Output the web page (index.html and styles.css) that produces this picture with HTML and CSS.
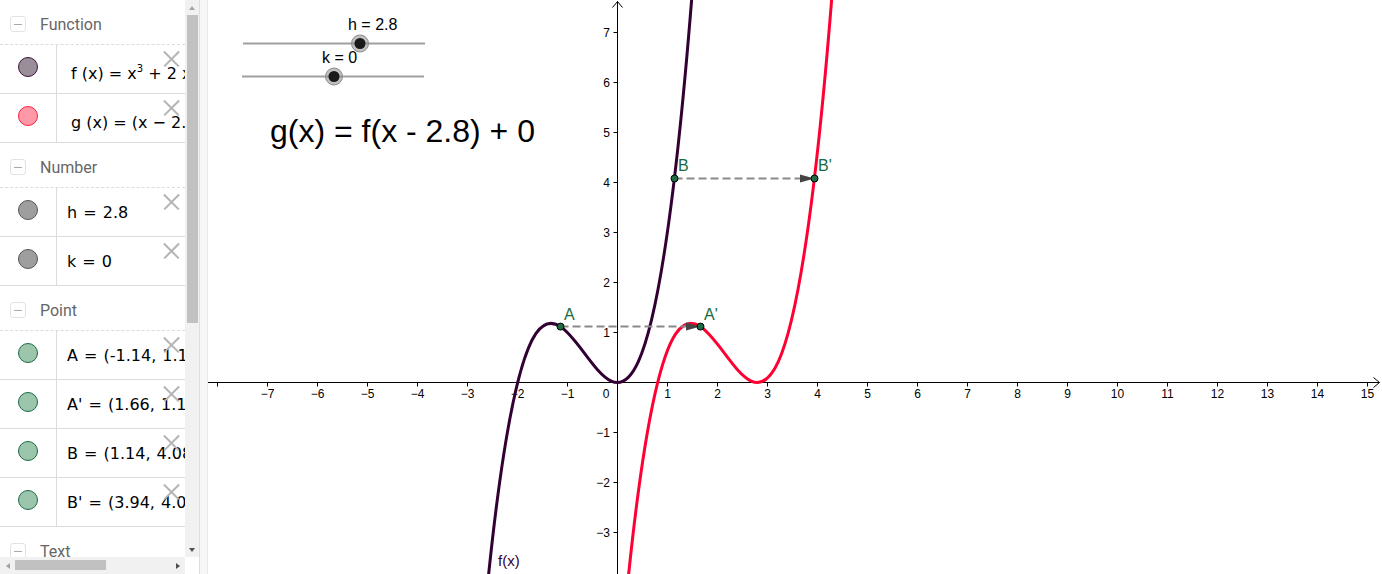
FILE: index.html
```html
<!DOCTYPE html>
<html>
<head>
<meta charset="utf-8">
<link rel="stylesheet" href="styles.css">
</head>
<body>
<div class="app">
  <aside class="algebra">
    <div class="av-content">
      <section class="group">
        <div class="group-head"><span class="toggle"></span><span class="group-title">Function</span></div>
        <div class="item">
          <div class="marble-cell"><span class="marble m-f"></span></div>
          <div class="item-text math">f (x) = x<sup>3</sup> + 2 x<sup>2</sup></div>
          <span class="close"></span>
        </div>
        <div class="item">
          <div class="marble-cell"><span class="marble m-g"></span></div>
          <div class="item-text math">g (x) = (x − 2.8)<sup>3</sup> + 2 (x − 2.8)<sup>2</sup></div>
          <span class="close"></span>
        </div>
      </section>
      <section class="group">
        <div class="group-head"><span class="toggle"></span><span class="group-title">Number</span></div>
        <div class="item">
          <div class="marble-cell"><span class="marble m-num"></span></div>
          <div class="item-text">h = 2.8</div>
          <span class="close"></span>
        </div>
        <div class="item">
          <div class="marble-cell"><span class="marble m-num"></span></div>
          <div class="item-text">k = 0</div>
          <span class="close"></span>
        </div>
      </section>
      <section class="group">
        <div class="group-head"><span class="toggle"></span><span class="group-title">Point</span></div>
        <div class="item">
          <div class="marble-cell"><span class="marble m-pt"></span></div>
          <div class="item-text">A = (-1.14, 1.12)</div>
          <span class="close"></span>
        </div>
        <div class="item">
          <div class="marble-cell"><span class="marble m-pt"></span></div>
          <div class="item-text">A' = (1.66, 1.12)</div>
          <span class="close"></span>
        </div>
        <div class="item">
          <div class="marble-cell"><span class="marble m-pt"></span></div>
          <div class="item-text">B = (1.14, 4.08)</div>
          <span class="close"></span>
        </div>
        <div class="item">
          <div class="marble-cell"><span class="marble m-pt"></span></div>
          <div class="item-text">B' = (3.94, 4.08)</div>
          <span class="close"></span>
        </div>
      </section>
      <section class="group">
        <div class="group-head"><span class="toggle"></span><span class="group-title">Text</span></div>
      </section>
    </div>
    <div class="vscroll">
      <div class="sb-btn"><span class="arr arr-up"></span></div>
      <div class="vtrack"><div class="vthumb"></div></div>
      <div class="sb-btn"><span class="arr arr-down"></span></div>
    </div>
    <div class="hscroll">
      <div class="sb-btn-h"><span class="arr arr-left"></span></div>
      <div class="htrack"><div class="hthumb"></div></div>
      <div class="sb-btn-h"><span class="arr arr-right"></span></div>
    </div>
    <div class="corner"></div>
  </aside>
  <div class="divider"></div>
  <main class="graphics">
    <svg class="canvas" viewBox="208 0 1174 574" width="1174" height="574" xmlns="http://www.w3.org/2000/svg">
      <path class="axis" d="M208 382.5H1379.5M1373.5 377.5L1379.5 382.5L1373.5 387.5"/>
      <path class="axis" d="M617.5 574V1.5M612.5 7.5L617.5 1.5L622.5 7.5"/>
      <path class="axis" d="M217.5 382.5v4M267.5 382.5v4M317.5 382.5v4M367.5 382.5v4M417.5 382.5v4M467.5 382.5v4M517.5 382.5v4M567.5 382.5v4M667.5 382.5v4M717.5 382.5v4M767.5 382.5v4M817.5 382.5v4M867.5 382.5v4M917.5 382.5v4M967.5 382.5v4M1017.5 382.5v4M1067.5 382.5v4M1117.5 382.5v4M1167.5 382.5v4M1217.5 382.5v4M1267.5 382.5v4M1317.5 382.5v4M1367.5 382.5v4"/>
      <path class="axis" d="M613.5 32.5h4M613.5 82.5h4M613.5 132.5h4M613.5 182.5h4M613.5 232.5h4M613.5 282.5h4M613.5 332.5h4M613.5 432.5h4M613.5 482.5h4M613.5 532.5h4"/>
      <g class="axlbl xl">
        <text x="267.5" y="398">−7</text>
        <text x="317.5" y="398">−6</text>
        <text x="367.5" y="398">−5</text>
        <text x="417.5" y="398">−4</text>
        <text x="467.5" y="398">−3</text>
        <text x="517.5" y="398">−2</text>
        <text x="567.5" y="398">−1</text>
        <text x="606" y="398">0</text>
        <text x="667.5" y="398">1</text>
        <text x="717.5" y="398">2</text>
        <text x="767.5" y="398">3</text>
        <text x="817.5" y="398">4</text>
        <text x="867.5" y="398">5</text>
        <text x="917.5" y="398">6</text>
        <text x="967.5" y="398">7</text>
        <text x="1017.5" y="398">8</text>
        <text x="1067.5" y="398">9</text>
        <text x="1117.5" y="398">10</text>
        <text x="1167.5" y="398">11</text>
        <text x="1217.5" y="398">12</text>
        <text x="1267.5" y="398">13</text>
        <text x="1317.5" y="398">14</text>
        <text x="1367.5" y="398">15</text>
      </g>
      <g class="axlbl yl">
        <text x="610" y="37">7</text>
        <text x="610" y="87">6</text>
        <text x="610" y="137">5</text>
        <text x="610" y="187">4</text>
        <text x="610" y="237">3</text>
        <text x="610" y="287">2</text>
        <text x="610" y="337">1</text>
        <text x="610" y="437">−1</text>
        <text x="610" y="487">−2</text>
        <text x="610" y="537">−3</text>
      </g>
      <path class="curve-f" d="M487.5 585.3C555.833 -89.83 624.167 860 692.5 -11.25"/>
      <path class="curve-g" d="M627.5 585.3C695.833 -89.83 764.167 860 832.5 -11.25"/>
      <line class="vec" x1="560.5" y1="326.6" x2="688" y2="326.6"/>
      <polygon class="vec-head" points="686,322.6 700.5,326.6 686,330.6"/>
      <line class="vec" x1="674.5" y1="178.5" x2="802" y2="178.5"/>
      <polygon class="vec-head" points="800,174.5 814.5,178.5 800,182.5"/>
      <circle class="pt" cx="560.5" cy="326.6" r="3.5"/>
      <circle class="pt" cx="700.5" cy="326.6" r="3.5"/>
      <circle class="pt" cx="674.5" cy="178.5" r="3.5"/>
      <circle class="pt" cx="814.5" cy="178.5" r="3.5"/>
      <g class="ptlbl">
        <text x="564" y="320">A</text>
        <text x="704" y="320">A'</text>
        <text x="678" y="171">B</text>
        <text x="818" y="171">B'</text>
      </g>
      <text class="flbl" x="498" y="566">f(x)</text>
      <line class="slider-line" x1="243" y1="43.5" x2="425" y2="43.5"/>
      <circle class="knob-halo" cx="360" cy="43.5" r="8.5"/>
      <circle class="knob" cx="360" cy="43.5" r="5.5"/>
      <text class="slbl" x="348" y="30">h = 2.8</text>
      <line class="slider-line" x1="242" y1="76.5" x2="424" y2="76.5"/>
      <circle class="knob-halo" cx="334" cy="76.5" r="8.5"/>
      <circle class="knob" cx="334" cy="76.5" r="5.5"/>
      <text class="slbl" x="322" y="63">k = 0</text>
      <text class="caption" x="270" y="142">g(x) = f(x - 2.8) + 0</text>
    </svg>
  </main>
</div>
</body>
</html>
```
FILE: styles.css
```css
html, body {
  margin: 0;
  padding: 0;
  width: 1382px;
  height: 574px;
  overflow: hidden;
  background: #fff;
}

.app {
  display: flex;
  width: 1382px;
  height: 574px;
}

/* ---------- algebra view ---------- */
.algebra {
  flex: none;
  width: 199px;
  height: 574px;
  display: grid;
  grid-template-columns: 185px 14px;
  grid-template-rows: 557px 17px;
  background: #fff;
}

.av-content {
  overflow: hidden;
  font-family: "DejaVu Sans", sans-serif;
  color: #000;
}

.group-head {
  box-sizing: border-box;
  height: 45px;
  padding-top: 4px;
  display: flex;
  align-items: center;
  border-bottom: 1px dashed #dcdcdc;
}

.toggle {
  box-sizing: border-box;
  width: 16px;
  height: 16px;
  margin-left: 10px;
  margin-right: 14px;
  border: 1px solid #e3e3e3;
  border-radius: 3px;
  display: flex;
  align-items: center;
  justify-content: center;
}

.toggle::before {
  content: "";
  width: 8px;
  height: 1px;
  background: #a8a8a8;
}

.group-title {
  font-family: Roboto, "Liberation Sans", sans-serif;
  font-size: 16px;
  color: #666;
}

.item {
  box-sizing: border-box;
  height: 49px;
  display: flex;
  position: relative;
  border-bottom: 1px solid #dcdcdc;
}

.marble-cell {
  flex: none;
  width: 56px;
  border-right: 1px solid #dcdcdc;
  display: flex;
  justify-content: center;
  align-items: flex-start;
}

.marble {
  box-sizing: border-box;
  width: 20px;
  height: 20px;
  margin-top: 12px;
  border-radius: 50%;
  border: 1px solid #444;
}

.m-f { background: #9a8e9a; border-color: #3a1438; }
.m-g { background: #ff99a8; border-color: #ff1a45; }
.m-num { background: #9e9e9e; border-color: #555; }
.m-pt { background: #9cc6ab; border-color: #1d6b45; }

.item-text {
  white-space: nowrap;
  font-size: 16px;
  line-height: 20px;
  padding-top: 15px;
  padding-left: 10px;
  word-spacing: 1px;
}

.item-text.math {
  padding-left: 14px;
  padding-top: 19px;
  word-spacing: 0;
}

.item-text sup {
  font-size: 10px;
  line-height: 0;
  vertical-align: 7px;
}

.close {
  position: absolute;
  left: 163px;
  top: 6px;
  width: 16px;
  height: 16px;
}

.close::before,
.close::after {
  content: "";
  position: absolute;
  left: -2px;
  top: 7px;
  width: 21px;
  height: 1.5px;
  background: #b4b4b4;
  transform: rotate(45deg);
}

.close::after {
  transform: rotate(-45deg);
}

/* scrollbars */
.vscroll {
  background: #f1f1f1;
  display: flex;
  flex-direction: column;
}

.sb-btn {
  flex: none;
  height: 15px;
  display: flex;
  align-items: center;
  justify-content: center;
}

.vtrack {
  flex: 1;
}

.vthumb {
  margin-left: 2px;
  width: 11px;
  height: 308px;
  background: #c1c1c1;
}

.hscroll {
  background: #f1f1f1;
  display: flex;
  align-items: center;
}

.sb-btn-h {
  flex: none;
  width: 15px;
  height: 17px;
  display: flex;
  align-items: center;
  justify-content: center;
}

.htrack {
  flex: 1;
  height: 17px;
  display: flex;
  align-items: center;
}

.hthumb {
  width: 91px;
  height: 10px;
  background: #c1c1c1;
  margin-top: -2px;
}

.corner {
  background: #fff;
}

.arr {
  width: 0;
  height: 0;
  border-style: solid;
}

.arr-up {
  border-width: 0 3.5px 4px 3.5px;
  border-color: transparent transparent #a3a3a3 transparent;
}

.arr-down {
  border-width: 4px 3.5px 0 3.5px;
  border-color: #505050 transparent transparent transparent;
}

.arr-left {
  border-width: 3.5px 4px 3.5px 0;
  border-color: transparent #a3a3a3 transparent transparent;
}

.arr-right {
  border-width: 3.5px 0 3.5px 4px;
  border-color: transparent transparent transparent #505050;
}

.divider {
  flex: none;
  box-sizing: border-box;
  width: 9px;
  height: 574px;
  border-left: 1px solid #dedede;
  border-right: 1px solid #e8e8e8;
  background: #f7f7f7;
}

/* ---------- graphics view ---------- */
.graphics {
  flex: 1;
  height: 574px;
  overflow: hidden;
}

.canvas {
  display: block;
}

.axis {
  fill: none;
  stroke: #000;
  stroke-width: 1;
}

.axlbl text {
  font-family: "Liberation Sans", Arial, sans-serif;
  font-size: 12px;
  fill: #000;
}

.xl text { text-anchor: middle; }
.yl text { text-anchor: end; }

.curve-f,
.curve-g {
  fill: none;
  stroke-width: 3;
  stroke-linecap: round;
}

.curve-f { stroke: #330033; }
.curve-g { stroke: #ff0033; }

.vec {
  stroke: #8a8a8a;
  stroke-width: 2;
  stroke-dasharray: 8 4;
}

.vec-head {
  fill: #444;
}

.pt {
  fill: #1e6b45;
  stroke: #000;
  stroke-width: 1;
}

.ptlbl text {
  font-family: "Liberation Sans", Arial, sans-serif;
  font-size: 16px;
  fill: #1a6b40;
}

.flbl {
  font-family: "Liberation Sans", Arial, sans-serif;
  font-size: 15px;
  fill: #330033;
}

.slider-line {
  stroke: #a0a0a0;
  stroke-width: 2;
}

.knob-halo {
  fill: #8c8c8c;
  fill-opacity: 0.55;
  stroke: #8c8c8c;
  stroke-width: 1;
}

.knob {
  fill: #1a1a1a;
}

.slbl {
  font-family: "Liberation Sans", Arial, sans-serif;
  font-size: 16px;
  fill: #000;
}

.caption {
  font-family: "Liberation Sans", Arial, sans-serif;
  font-size: 32px;
  fill: #000;
}
```
